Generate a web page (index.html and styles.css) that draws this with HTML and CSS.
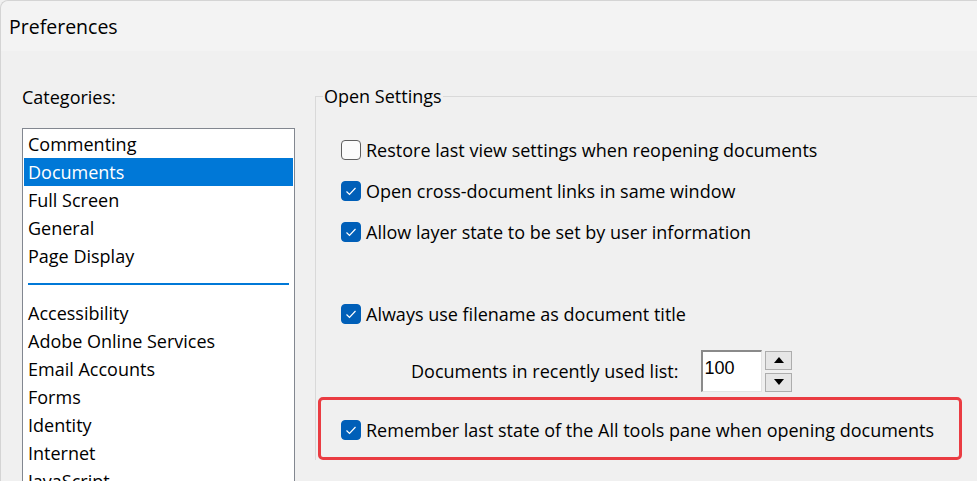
FILE: index.html
```html
<!DOCTYPE html>
<html>
<head>
<meta charset="utf-8">
<link rel="stylesheet" href="styles.css">
</head>
<body>
<div class="window">
  <div class="titlebar">Preferences</div>
  <div class="main">
    <div class="left">
      <div class="cat-label">Categories:</div>
      <div class="listbox">
        <div class="item">Commenting</div>
        <div class="item selected">Documents</div>
        <div class="item">Full Screen</div>
        <div class="item">General</div>
        <div class="item">Page Display</div>
        <div class="sep"></div>
        <div class="item">Accessibility</div>
        <div class="item">Adobe Online Services</div>
        <div class="item">Email Accounts</div>
        <div class="item">Forms</div>
        <div class="item">Identity</div>
        <div class="item">Internet</div>
        <div class="item">JavaScript</div>
        <div class="item">Language</div>
      </div>
    </div>
    <fieldset class="group">
      <legend class="legend">Open Settings</legend>
      <div class="rows">
        <div class="row"><span class="cb"></span><span>Restore last view settings when reopening documents</span></div>
        <div class="row"><span class="cb checked"><svg viewBox="0 0 20 20" width="20" height="20"><path d="M5.5 10.5 L8.5 13.5 L14.5 7" fill="none" stroke="#fff" stroke-width="1.2"/></svg></span><span>Open cross-document links in same window</span></div>
        <div class="row"><span class="cb checked"><svg viewBox="0 0 20 20" width="20" height="20"><path d="M5.5 10.5 L8.5 13.5 L14.5 7" fill="none" stroke="#fff" stroke-width="1.2"/></svg></span><span>Allow layer state to be set by user information</span></div>
        <div class="row spacer"></div>
        <div class="row"><span class="cb checked"><svg viewBox="0 0 20 20" width="20" height="20"><path d="M5.5 10.5 L8.5 13.5 L14.5 7" fill="none" stroke="#fff" stroke-width="1.2"/></svg></span><span>Always use filename as document title</span></div>
        <div class="spin-row">
          <span class="spin-label">Documents in recently used list:</span>
          <span class="spin-input">100</span>
          <span class="spin-btns">
            <span class="spin-btn"><svg viewBox="0 0 10 6" width="10" height="6"><path d="M0 6 L5 0 L10 6 Z" fill="#000"/></svg></span>
            <span class="spin-btn"><svg viewBox="0 0 10 6" width="10" height="6"><path d="M0 0 L5 6 L10 0 Z" fill="#000"/></svg></span>
          </span>
        </div>
        <div class="highlight">
          <div class="row"><span class="cb checked"><svg viewBox="0 0 20 20" width="20" height="20"><path d="M5.5 10.5 L8.5 13.5 L14.5 7" fill="none" stroke="#fff" stroke-width="1.2"/></svg></span><span>Remember last state of the All tools pane when opening documents</span></div>
        </div>
      </div>
    </fieldset>
  </div>
</div>
</body>
</html>
```
FILE: styles.css
```css
* { box-sizing: border-box; }
html, body { margin: 0; padding: 0; }
body {
  width: 977px;
  height: 481px;
  overflow: hidden;
  background: #f0f0f0;
  font-family: "Open Sans", "Noto Sans", sans-serif;
  font-size: 18px;
  color: #000;
}
.window {
  height: 481px;
  overflow: hidden;
  border-top: 1px solid #d4d4d4;
  border-left: 1px solid #d4d4d4;
  border-top-left-radius: 8px;
  background: #f0f0f0;
}
.titlebar {
  height: 50px;
  background: #f3f3f3;
  padding-left: 8px;
  font-size: 19.5px;
  line-height: 52px;
  border-top-left-radius: 8px;
}
.main {
  display: flex;
  align-items: flex-start;
}
.left {
  width: 294px;
  padding-left: 21px;
  padding-top: 33px;
  flex: none;
}
.cat-label {
  height: 26px;
  line-height: 26px;
  margin-bottom: 18px;
}
.listbox {
  width: 273px;
  height: 420px;
  background: #fff;
  border: 1px solid #828790;
  padding: 1px;
}
.item {
  height: 28px;
  line-height: 28px;
  padding-left: 4px;
  white-space: nowrap;
}
.item.selected {
  background: #0078d7;
  color: #fff;
}
.sep {
  height: 15px;
  margin: 0 4px 14px 4px;
  border-bottom: 2px solid #0078d7;
}
.group {
  flex: 1;
  margin: 0 0 0 20px;
  margin-top: 32px;
  padding: 0;
  border: none;
  border-top: 1px solid #d9d9d9;
  border-left: 1px solid #d9d9d9;
  min-width: 0;
}
.legend {
  margin-left: 7px;
  padding: 0 1px;
  line-height: 26px;
}
.rows {
  display: flex;
  flex-direction: column;
  padding-top: 20px;
}
.row {
  height: 41px;
  display: flex;
  align-items: center;
  padding-left: 25px;
  white-space: nowrap;
}
.row.spacer { height: 41px; }
.cb {
  width: 20px;
  height: 20px;
  border: 1px solid #5f5f5f;
  border-radius: 4px;
  background: #fbfbfb;
  margin-right: 5px;
  flex: none;
  display: flex;
  align-items: center;
  justify-content: center;
  overflow: hidden;
}
.cb.checked {
  background: #005fb8;
  border-color: #005fb8;
}
.cb svg { display: block; flex: none; }
.spin-row {
  display: flex;
  align-items: center;
  height: 42px;
  margin-top: 16px;
  padding-left: 95px;
}
.spin-label { margin-right: 23px; }
.spin-input {
  width: 61px;
  height: 42px;
  background: #fff;
  border-top: 2px solid #8a8a8a;
  border-left: 2px solid #8a8a8a;
  border-right: 1px solid #e3e3e3;
  border-bottom: 1px solid #e3e3e3;
  padding-left: 1px;
  line-height: 32px;
  font-family: "Liberation Sans", Arial, sans-serif;
  font-size: 18px;
}
.spin-btns {
  display: flex;
  flex-direction: column;
  gap: 3px;
  margin-left: 3px;
}
.spin-btn {
  width: 27px;
  height: 19px;
  background: #e6e6e6;
  border: 1px solid #adadad;
  display: flex;
  align-items: center;
  justify-content: center;
}
.spin-btn svg { display: block; }
.highlight {
  margin-top: 5px;
  margin-left: 2px;
  width: 644px;
  height: 63px;
  border: 3px solid #ea3c42;
  border-radius: 5px;
  display: flex;
  align-items: center;
  padding-top: 2px;
}
.highlight .row { padding-left: 20px; }
```
